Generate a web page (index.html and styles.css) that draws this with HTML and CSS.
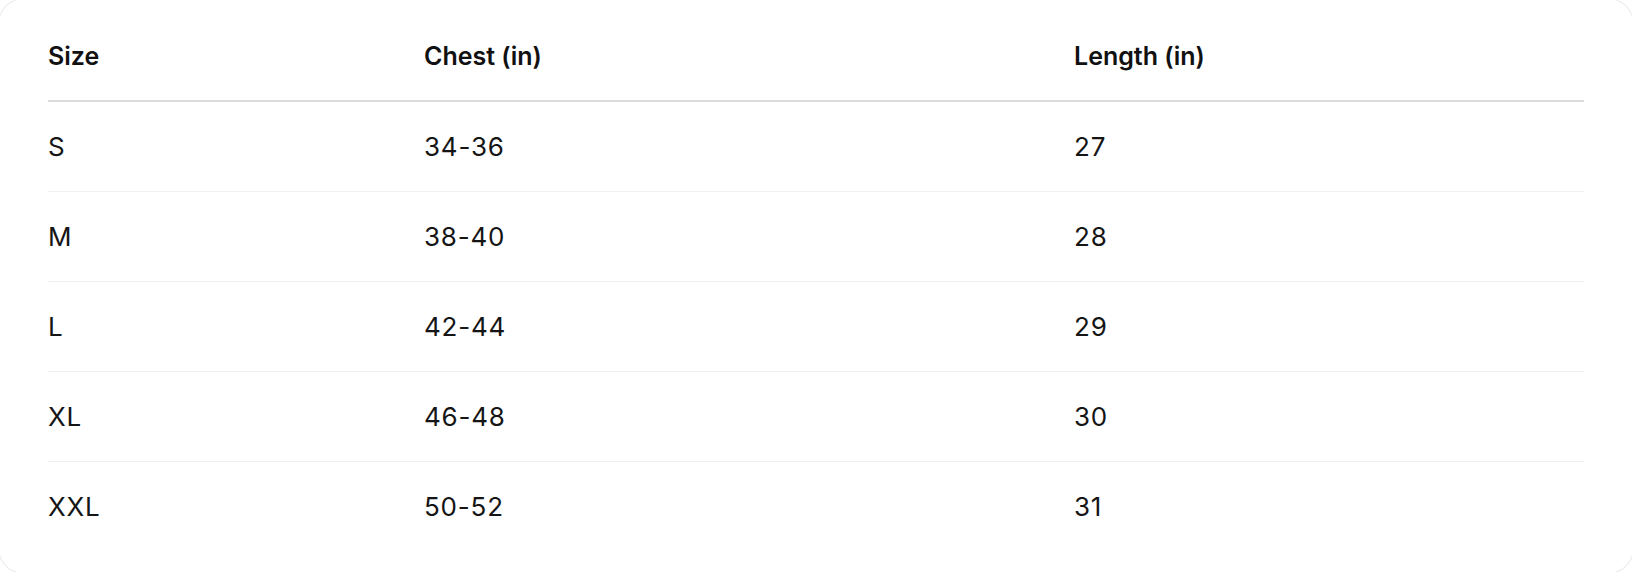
FILE: index.html
```html
<!DOCTYPE html>
<html lang="en">
<head>
<meta charset="utf-8">
<title>Size chart</title>
<link rel="stylesheet" href="styles.css">
</head>
<body>
<div class="card">
  <table class="size-table">
    <colgroup>
      <col class="col-size">
      <col class="col-chest">
      <col class="col-length">
    </colgroup>
    <thead>
      <tr><th>Size</th><th>Chest (in)</th><th>Length (in)</th></tr>
    </thead>
    <tbody>
      <tr><td>S</td><td>34-36</td><td>27</td></tr>
      <tr><td>M</td><td>38-40</td><td>28</td></tr>
      <tr><td>L</td><td>42-44</td><td>29</td></tr>
      <tr><td>XL</td><td>46-48</td><td>30</td></tr>
      <tr><td>XXL</td><td>50-52</td><td>31</td></tr>
    </tbody>
  </table>
</div>
</body>
</html>
```
FILE: styles.css
```css
html, body {
  margin: 0;
  padding: 0;
  background: #ffffff;
  overflow: hidden;
}
body {
  font-family: Inter, "Noto Sans", sans-serif;
  color: #111111;
}
.card {
  box-sizing: border-box;
  width: 1636px;
  height: 576px;
  margin: -2px;
  border: 1px solid #e6e6e6;
  border-radius: 26px;
  background: #ffffff;
  padding: 13px 49px 0 49px;
}
.size-table {
  width: 100%;
  border-collapse: collapse;
  table-layout: fixed;
}
.col-size { width: 376px; }
.col-chest { width: 650px; }
.size-table th {
  text-align: left;
  font-weight: 600;
  font-size: 25px;
  letter-spacing: 0;
  height: 88px;
  padding: 0;
  vertical-align: middle;
  border-bottom: 2px solid #dcdcdc;
  color: #111111;
}
.size-table td {
  font-size: 26px;
  font-weight: 400;
  letter-spacing: 0.8px;
  height: 89px;
  padding: 0;
  vertical-align: middle;
  border-bottom: 1px solid #efefef;
  color: #151515;
}
.size-table tbody tr:last-child td {
  border-bottom: none;
}
```
